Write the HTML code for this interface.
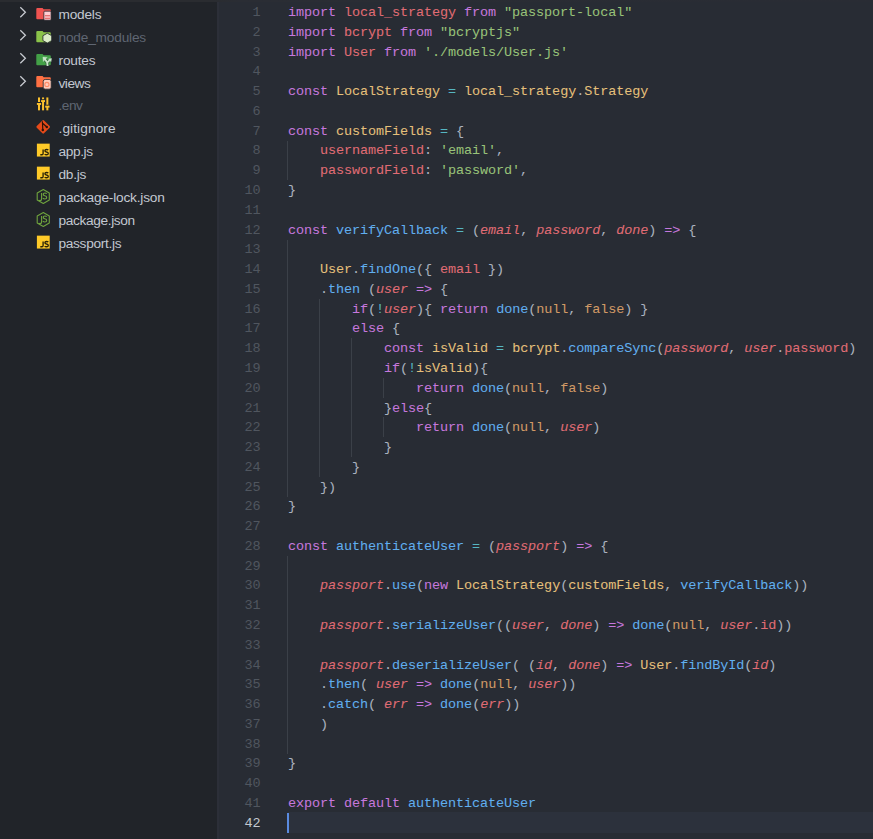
<!DOCTYPE html>
<html><head><meta charset="utf-8">
<style>
html,body{margin:0;padding:0;width:873px;height:839px;overflow:hidden;background:#282c34;}
body{position:relative;}
#top{position:absolute;left:0;top:0;width:873px;height:2.3px;background:linear-gradient(90deg,#2a2c30 0,#2a2c30 210px,#2a2d34 240px,#292c34 873px);}
#side{position:absolute;left:0;top:2.3px;width:216.5px;height:837px;background:#212429;}
#sideb{position:absolute;left:216.5px;top:2.3px;width:2.5px;height:837px;background:#2c2f38;}
.row{position:absolute;left:0;width:217px;height:22.9px;font-family:"Liberation Sans",sans-serif;font-size:13.7px;color:#c3c8d1;}
.row .t{position:absolute;left:58.5px;top:1.6px;line-height:22.9px;white-space:pre;}
.row.dim{color:#5f6672;}
.row svg{position:absolute;}
.chev{left:18px;top:4px;}
.ico{left:36px;top:3.45px;}
.ln{position:absolute;left:220px;width:40.5px;text-align:right;font-family:"Liberation Mono",monospace;font-size:13.50px;line-height:19.77px;color:#50565f;letter-spacing:-0.10px;}
.ln.act{color:#c3c8d0;}
.cl{position:absolute;left:288px;font-family:"Liberation Mono",monospace;font-size:13.50px;line-height:19.77px;color:#abb2bf;white-space:pre;letter-spacing:-0.10px;-webkit-text-stroke:0.05px currentColor;}
.k{color:#c678dd}.v{color:#e06c75}.i{color:#e06c75;font-style:italic}.s{color:#98c379}.f{color:#61afef}.c{color:#e5c07b}.n{color:#d19a66}.o{color:#56b6c2}
.guide{position:absolute;width:1px;background:#3b4048;}
#curline{position:absolute;left:288px;width:585px;top:812px;height:21.2px;background:#2c313c;}
#cursor{position:absolute;left:287px;width:2px;top:813px;height:20px;background:#5a8be0;}
</style></head><body>
<div id="top"></div>
<div id="side"></div>
<div class="row" style="top:2.30px"><svg class="chev" width="10" height="16" viewBox="0 0 10 16"><path d="M2.3 1.2L7.4 6.3L2.3 11.3" fill="none" stroke="#c9ccd2" stroke-width="1.25"/></svg><svg class="ico" width="16" height="16" viewBox="0 0 16 16"><path d="M0.3 2.95Q0.3 1.95 1.3 1.95H6.6L7.6 3.25H13.8Q14.8 3.25 14.8 4.25V12.15Q14.8 13.15 13.8 13.15H1.3Q0.3 13.15 0.3 12.15Z" fill="#ef5350"/><rect x="7.85" y="5.15" width="7.25" height="9.1" rx="0.9" fill="#ffcdd2" stroke="#21252b" stroke-width="0.8"/><rect x="8.9" y="9" width="5.2" height="1.4" fill="#e57373"/><rect x="8.9" y="11.7" width="5.2" height="1.4" fill="#e57373"/></svg><span class="t" style="letter-spacing:-0.22px">models</span></div>
<div class="row dim" style="top:25.20px"><svg class="chev" width="10" height="16" viewBox="0 0 10 16"><path d="M2.3 1.2L7.4 6.3L2.3 11.3" fill="none" stroke="#c9ccd2" stroke-width="1.25"/></svg><svg class="ico" width="16" height="16" viewBox="0 0 16 16"><path d="M0.3 2.95Q0.3 1.95 1.3 1.95H6.6L7.6 3.25H13.8Q14.8 3.25 14.8 4.25V12.15Q14.8 13.15 13.8 13.15H1.3Q0.3 13.15 0.3 12.15Z" fill="#8bc34a"/><path d="M11.3 4.25L15.7 6.7V11.6L11.3 14.05L6.9 11.6V6.7Z" fill="#dcedc8" stroke="#21252b" stroke-width="0.8" stroke-linejoin="round"/></svg><span class="t" style="letter-spacing:-0.19px">node_modules</span></div>
<div class="row" style="top:48.10px"><svg class="chev" width="10" height="16" viewBox="0 0 10 16"><path d="M2.3 1.2L7.4 6.3L2.3 11.3" fill="none" stroke="#c9ccd2" stroke-width="1.25"/></svg><svg class="ico" width="16" height="16" viewBox="0 0 16 16"><path d="M0.3 2.95Q0.3 1.95 1.3 1.95H6.6L7.6 3.25H13.8Q14.8 3.25 14.8 4.25V12.15Q14.8 13.15 13.8 13.15H1.3Q0.3 13.15 0.3 12.15Z" fill="#43a047"/><g stroke="#21252b" stroke-width="3.2" fill="none" stroke-linejoin="round" opacity="0.55"><path d="M8.6 6.8L11.2 10.4L11.6 14.2M11.2 10.4L13.8 8.1"/></g><g stroke="#c8e6c9" stroke-width="1.9" fill="none"><path d="M8.6 6.8L11.2 10.4L11.6 14"/><path d="M11.2 10.4L13.8 8.1"/></g><path d="M6.9 5.1L11.2 5.5L7.3 9.5Z M15.6 6.5L12.4 6.9L15 9.7Z" fill="#c8e6c9" stroke="#c8e6c9" stroke-width="0.4" stroke-linejoin="round"/></svg><span class="t" style="letter-spacing:-0.18px">routes</span></div>
<div class="row" style="top:71.00px"><svg class="chev" width="10" height="16" viewBox="0 0 10 16"><path d="M2.3 1.2L7.4 6.3L2.3 11.3" fill="none" stroke="#c9ccd2" stroke-width="1.25"/></svg><svg class="ico" width="16" height="16" viewBox="0 0 16 16"><path d="M0.3 2.95Q0.3 1.95 1.3 1.95H6.6L7.6 3.25H13.8Q14.8 3.25 14.8 4.25V12.15Q14.8 13.15 13.8 13.15H1.3Q0.3 13.15 0.3 12.15Z" fill="#ff7043"/><rect x="7.2" y="5.45" width="8" height="9.7" rx="2" fill="#ffccbc" stroke="#21252b" stroke-width="0.8"/><circle cx="10.9" cy="10.45" r="2.1" fill="none" stroke="#ff8a65" stroke-width="1.1"/></svg><span class="t" style="letter-spacing:-0.5px">views</span></div>
<div class="row dim" style="top:93.90px"><svg class="ico" width="16" height="16" viewBox="0 0 16 16"><g fill="#fbc02d"><rect x="2" y="0.45" width="2" height="12.9"/><rect x="6.06" y="0.45" width="2" height="12.9"/><rect x="10.35" y="0.45" width="2" height="12.9"/><rect x="0.9" y="6" width="4.2" height="1.9"/><rect x="5.1" y="3.1" width="3.9" height="1.9"/><rect x="9.2" y="8.7" width="4.3" height="1.9"/></g><g fill="#21252b"><rect x="2" y="5" width="2" height="1"/><rect x="6.06" y="2.2" width="2" height="0.9"/><rect x="10.35" y="7.7" width="2" height="1"/></g></svg><span class="t" style="letter-spacing:-0.5px">.env</span></div>
<div class="row" style="top:116.80px"><svg class="ico" width="16" height="16" viewBox="0 0 16 16"><path d="M7.2 1.2L12.85 6.85L7.2 12.5L1.55 6.85Z" fill="#e64a19" stroke="#e64a19" stroke-width="2.2" stroke-linejoin="round"/><path d="M6.4 1.4L6.8 9.8M6.6 3.2L10.8 7" stroke="#2a1208" stroke-width="1.15" fill="none"/><circle cx="6.8" cy="10" r="1.2" fill="#2a1208"/><circle cx="10.8" cy="7" r="1.2" fill="#2a1208"/></svg><span class="t" style="letter-spacing:0.09px">.gitignore</span></div>
<div class="row" style="top:139.70px"><svg class="ico" width="16" height="16" viewBox="0 0 16 16"><rect x="0.9" y="0.65" width="12.8" height="12.9" fill="#ffca28"/><g fill="none" stroke="#2b2408" stroke-width="1.35"><path d="M7.1 6.5V10.5Q7.1 11.7 5.9 11.7H4.3"/><path d="M12.3 7.1Q11.8 6.5 10.5 6.5Q8.9 6.5 8.9 7.8Q8.9 8.6 10.5 9Q12.3 9.4 12.3 10.5Q12.3 11.7 10.5 11.7Q9.2 11.7 8.7 11.1"/></g></svg><span class="t" style="letter-spacing:-0.4px">app.js</span></div>
<div class="row" style="top:162.60px"><svg class="ico" width="16" height="16" viewBox="0 0 16 16"><rect x="0.9" y="0.65" width="12.8" height="12.9" fill="#ffca28"/><g fill="none" stroke="#2b2408" stroke-width="1.35"><path d="M7.1 6.5V10.5Q7.1 11.7 5.9 11.7H4.3"/><path d="M12.3 7.1Q11.8 6.5 10.5 6.5Q8.9 6.5 8.9 7.8Q8.9 8.6 10.5 9Q12.3 9.4 12.3 10.5Q12.3 11.7 10.5 11.7Q9.2 11.7 8.7 11.1"/></g></svg><span class="t" style="letter-spacing:-0.25px">db.js</span></div>
<div class="row" style="top:185.50px"><svg class="ico" width="16" height="16" viewBox="0 0 16 16"><path d="M7.3 0.6L13.3 4V11L7.3 14.4L1.2 11V4Z" fill="none" stroke="#6fa33e" stroke-width="1.1" stroke-linejoin="round"/><g fill="none" stroke="#6fa33e" stroke-width="1.15"><path d="M5.6 4.1V10Q5.6 11.6 4 11.6Q3 11.6 2.6 11"/><path d="M10.7 4.8Q10.2 4 8.9 4Q7.3 4 7.3 5.4Q7.3 6.4 8.9 6.8Q10.7 7.2 10.7 8.5Q10.7 10 8.9 10Q7.5 10 6.9 9.2"/></g></svg><span class="t" style="letter-spacing:-0.2px">package-lock.json</span></div>
<div class="row" style="top:208.40px"><svg class="ico" width="16" height="16" viewBox="0 0 16 16"><path d="M7.3 0.6L13.3 4V11L7.3 14.4L1.2 11V4Z" fill="none" stroke="#6fa33e" stroke-width="1.1" stroke-linejoin="round"/><g fill="none" stroke="#6fa33e" stroke-width="1.15"><path d="M5.6 4.1V10Q5.6 11.6 4 11.6Q3 11.6 2.6 11"/><path d="M10.7 4.8Q10.2 4 8.9 4Q7.3 4 7.3 5.4Q7.3 6.4 8.9 6.8Q10.7 7.2 10.7 8.5Q10.7 10 8.9 10Q7.5 10 6.9 9.2"/></g></svg><span class="t" style="letter-spacing:-0.36px">package.json</span></div>
<div class="row" style="top:231.30px"><svg class="ico" width="16" height="16" viewBox="0 0 16 16"><rect x="0.9" y="0.65" width="12.8" height="12.9" fill="#ffca28"/><g fill="none" stroke="#2b2408" stroke-width="1.35"><path d="M7.1 6.5V10.5Q7.1 11.7 5.9 11.7H4.3"/><path d="M12.3 7.1Q11.8 6.5 10.5 6.5Q8.9 6.5 8.9 7.8Q8.9 8.6 10.5 9Q12.3 9.4 12.3 10.5Q12.3 11.7 10.5 11.7Q9.2 11.7 8.7 11.1"/></g></svg><span class="t" style="letter-spacing:-0.32px">passport.js</span></div>
<div id="sideb"></div>
<div id="curline"></div>
<div class="guide" style="left:287.0px;top:140.69px;height:39.54px"></div>
<div class="guide" style="left:287.0px;top:239.54px;height:257.01px"></div>
<div class="guide" style="left:319.0px;top:298.85px;height:177.93px"></div>
<div class="guide" style="left:351.0px;top:338.39px;height:118.62px"></div>
<div class="guide" style="left:383.0px;top:377.93px;height:19.77px"></div>
<div class="guide" style="left:383.0px;top:417.47px;height:19.77px"></div>
<div class="guide" style="left:287.0px;top:555.86px;height:197.70px"></div>
<div class="ln" style="top:3.10px">1</div>
<div class="cl" style="top:3.10px"><span class="k">import</span> <span class="v">local_strategy</span> <span class="k">from</span> <span class="s">&quot;passport-local&quot;</span></div>
<div class="ln" style="top:22.87px">2</div>
<div class="cl" style="top:22.87px"><span class="k">import</span> <span class="v">bcrypt</span> <span class="k">from</span> <span class="s">&quot;bcryptjs&quot;</span></div>
<div class="ln" style="top:42.64px">3</div>
<div class="cl" style="top:42.64px"><span class="k">import</span> <span class="v">User</span> <span class="k">from</span> <span class="s">&#x27;./models/User.js&#x27;</span></div>
<div class="ln" style="top:62.41px">4</div>
<div class="ln" style="top:82.18px">5</div>
<div class="cl" style="top:82.18px"><span class="k">const</span> <span class="c">LocalStrategy</span> <span class="o">=</span> <span class="c">local_strategy</span>.<span class="c">Strategy</span></div>
<div class="ln" style="top:101.95px">6</div>
<div class="ln" style="top:121.72px">7</div>
<div class="cl" style="top:121.72px"><span class="k">const</span> <span class="c">customFields</span> <span class="o">=</span> {</div>
<div class="ln" style="top:141.49px">8</div>
<div class="cl" style="top:141.49px">    <span class="v">usernameField</span>: <span class="s">&#x27;email&#x27;</span>,</div>
<div class="ln" style="top:161.26px">9</div>
<div class="cl" style="top:161.26px">    <span class="v">passwordField</span>: <span class="s">&#x27;password&#x27;</span>,</div>
<div class="ln" style="top:181.03px">10</div>
<div class="cl" style="top:181.03px">}</div>
<div class="ln" style="top:200.80px">11</div>
<div class="ln" style="top:220.57px">12</div>
<div class="cl" style="top:220.57px"><span class="k">const</span> <span class="f">verifyCallback</span> <span class="o">=</span> (<span class="i">email</span>, <span class="i">password</span>, <span class="i">done</span>) <span class="k">=&gt;</span> {</div>
<div class="ln" style="top:240.34px">13</div>
<div class="ln" style="top:260.11px">14</div>
<div class="cl" style="top:260.11px">    <span class="c">User</span>.<span class="f">findOne</span>({ <span class="v">email</span> })</div>
<div class="ln" style="top:279.88px">15</div>
<div class="cl" style="top:279.88px">    .<span class="f">then</span> (<span class="i">user</span> <span class="k">=&gt;</span> {</div>
<div class="ln" style="top:299.65px">16</div>
<div class="cl" style="top:299.65px">        <span class="k">if</span>(<span class="o">!</span><span class="i">user</span>){ <span class="k">return</span> <span class="f">done</span>(<span class="n">null</span>, <span class="n">false</span>) }</div>
<div class="ln" style="top:319.42px">17</div>
<div class="cl" style="top:319.42px">        <span class="k">else</span> {</div>
<div class="ln" style="top:339.19px">18</div>
<div class="cl" style="top:339.19px">            <span class="k">const</span> <span class="c">isValid</span> <span class="o">=</span> <span class="c">bcrypt</span>.<span class="f">compareSync</span>(<span class="i">password</span>, <span class="i">user</span>.<span class="v">password</span>)</div>
<div class="ln" style="top:358.96px">19</div>
<div class="cl" style="top:358.96px">            <span class="k">if</span>(<span class="o">!</span><span class="c">isValid</span>){</div>
<div class="ln" style="top:378.73px">20</div>
<div class="cl" style="top:378.73px">                <span class="k">return</span> <span class="f">done</span>(<span class="n">null</span>, <span class="n">false</span>)</div>
<div class="ln" style="top:398.50px">21</div>
<div class="cl" style="top:398.50px">            }<span class="k">else</span>{</div>
<div class="ln" style="top:418.27px">22</div>
<div class="cl" style="top:418.27px">                <span class="k">return</span> <span class="f">done</span>(<span class="n">null</span>, <span class="i">user</span>)</div>
<div class="ln" style="top:438.04px">23</div>
<div class="cl" style="top:438.04px">            }</div>
<div class="ln" style="top:457.81px">24</div>
<div class="cl" style="top:457.81px">        }</div>
<div class="ln" style="top:477.58px">25</div>
<div class="cl" style="top:477.58px">    })</div>
<div class="ln" style="top:497.35px">26</div>
<div class="cl" style="top:497.35px">}</div>
<div class="ln" style="top:517.12px">27</div>
<div class="ln" style="top:536.89px">28</div>
<div class="cl" style="top:536.89px"><span class="k">const</span> <span class="f">authenticateUser</span> <span class="o">=</span> (<span class="i">passport</span>) <span class="k">=&gt;</span> {</div>
<div class="ln" style="top:556.66px">29</div>
<div class="ln" style="top:576.43px">30</div>
<div class="cl" style="top:576.43px">    <span class="i">passport</span>.<span class="f">use</span>(<span class="k">new</span> <span class="c">LocalStrategy</span>(<span class="c">customFields</span>, <span class="f">verifyCallback</span>))</div>
<div class="ln" style="top:596.20px">31</div>
<div class="ln" style="top:615.97px">32</div>
<div class="cl" style="top:615.97px">    <span class="i">passport</span>.<span class="f">serializeUser</span>((<span class="i">user</span>, <span class="i">done</span>) <span class="k">=&gt;</span> <span class="f">done</span>(<span class="n">null</span>, <span class="i">user</span>.<span class="v">id</span>))</div>
<div class="ln" style="top:635.74px">33</div>
<div class="ln" style="top:655.51px">34</div>
<div class="cl" style="top:655.51px">    <span class="i">passport</span>.<span class="f">deserializeUser</span>( (<span class="i">id</span>, <span class="i">done</span>) <span class="k">=&gt;</span> <span class="c">User</span>.<span class="f">findById</span>(<span class="i">id</span>)</div>
<div class="ln" style="top:675.28px">35</div>
<div class="cl" style="top:675.28px">    .<span class="f">then</span>( <span class="i">user</span> <span class="k">=&gt;</span> <span class="f">done</span>(<span class="n">null</span>, <span class="i">user</span>))</div>
<div class="ln" style="top:695.05px">36</div>
<div class="cl" style="top:695.05px">    .<span class="f">catch</span>( <span class="i">err</span> <span class="k">=&gt;</span> <span class="f">done</span>(<span class="i">err</span>))</div>
<div class="ln" style="top:714.82px">37</div>
<div class="cl" style="top:714.82px">    )</div>
<div class="ln" style="top:734.59px">38</div>
<div class="ln" style="top:754.36px">39</div>
<div class="cl" style="top:754.36px">}</div>
<div class="ln" style="top:774.13px">40</div>
<div class="ln" style="top:793.90px">41</div>
<div class="cl" style="top:793.90px"><span class="k">export</span> <span class="k">default</span> <span class="f">authenticateUser</span></div>
<div class="ln act" style="top:813.67px">42</div>
<div id="cursor"></div>
</body></html>
